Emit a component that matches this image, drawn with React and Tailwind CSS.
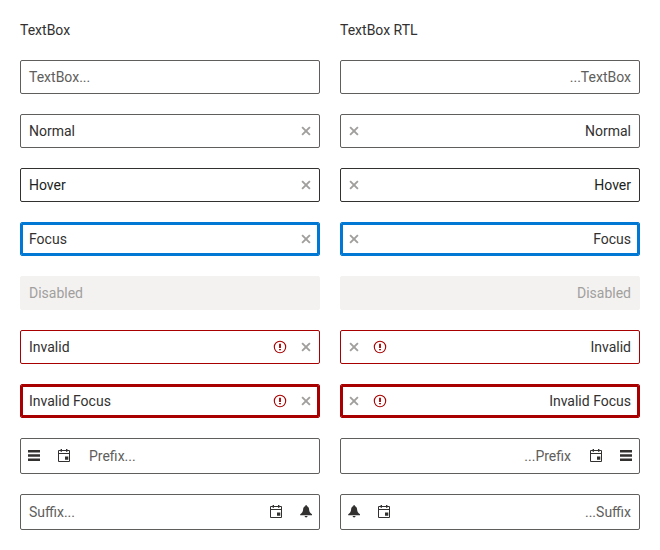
import React from "react";
import clsx from "clsx";

function Svg({ children, className }) {
  return (
    <svg viewBox="0 0 16 16" className={clsx("size-4 shrink-0", className)} aria-hidden="true">
      {children}
    </svg>
  );
}

function ClearIcon() {
  return (
    <Svg className="text-[#a19f9d]">
      <path d="M4.1 4.1 11.9 11.9M11.9 4.1 4.1 11.9" stroke="currentColor" strokeWidth="1.9" fill="none" />
    </Svg>
  );
}

function InvalidIcon() {
  return (
    <Svg className="text-[#a80000]">
      <circle cx="8" cy="8" r="5.7" fill="none" stroke="currentColor" strokeWidth="1.1" />
      <path d="M7.1 4.7h1.8V9H7.1zM7.1 9.9h1.8v1.4H7.1z" fill="currentColor" />
    </Svg>
  );
}

function MenuIcon() {
  return (
    <Svg className="text-[#323130]">
      <path d="M2 1.9h12v2.5H2zM2 6.2h12v2.5H2zM2 10.5h12V13H2z" fill="currentColor" />
    </Svg>
  );
}

function CalendarIcon() {
  return (
    <Svg className="text-[#323130]">
      <path d="M2.5 2.5h11v11h-11zM2.5 5.5h11" fill="none" stroke="currentColor" strokeWidth="1" />
      <path d="M4.6 1h1.4v2.8H4.6zM10 1h1.4v2.8H10zM9 8.5h3.3v3.3H9z" fill="currentColor" />
    </Svg>
  );
}

function BellIcon() {
  return (
    <Svg className="text-[#323130]">
      <path
        d="M7.5 1h1.2v1.1c1.5.4 2.2 1.5 2.4 3.3.2 2.5.9 3.5 2.9 4.8v1.1H2.2v-1.1c2-1.3 2.7-2.3 2.9-4.8.2-1.8.9-2.9 2.4-3.3zM6.6 12.1h3c-.1.9-.7 1.4-1.5 1.4s-1.4-.5-1.5-1.4z"
        fill="currentColor"
      />
    </Svg>
  );
}

const STATES = {
  normal: "border-[#605e5c] text-[#323130]",
  placeholder: "border-[#605e5c] text-[#605e5c]",
  hover: "border-[#323130] text-[#201f1e]",
  focus: "border-[#0078d4] text-[#323130] inset-shadow-[0_0_0_2px_#0078d4]",
  disabled: "border-[#f3f2f1] bg-[#f3f2f1] text-[#a19f9d]",
  invalid: "border-[#a80000] text-[#323130]",
  invalidFocus: "border-[#a80000] text-[#323130] inset-shadow-[0_0_0_2px_#a80000]",
};

function TextBox({ state = "normal", text, clear, invalid, prefix, suffix }) {
  return (
    <div
      className={clsx(
        "flex items-center rounded-[2px] border",
        prefix || suffix ? "h-9" : "h-[34px]",
        STATES[state],
      )}
    >
      {prefix && <div className="flex items-center gap-3.5 ps-[5px] pe-[9px]">{prefix}</div>}
      <span className="min-w-0 flex-1 px-2">{text}</span>
      <div className="flex items-center gap-2.5 pe-[5px]">
        {invalid && <InvalidIcon />}
        {clear && <ClearIcon />}
        {suffix && <div className="flex items-center gap-3.5">{suffix}</div>}
      </div>
    </div>
  );
}

function Column({ title, dir }) {
  return (
    <section className="flex w-[300px] flex-col gap-5">
      <h2 className="h-5">{title}</h2>
      <div dir={dir} className="flex flex-col gap-5">
        <TextBox state="placeholder" text="TextBox..." />
        <TextBox text="Normal" clear />
        <TextBox state="hover" text="Hover" clear />
        <TextBox state="focus" text="Focus" clear />
        <TextBox state="disabled" text="Disabled" />
        <TextBox state="invalid" text="Invalid" clear invalid />
        <TextBox state="invalidFocus" text="Invalid Focus" clear invalid />
        <TextBox state="placeholder" text="Prefix..." prefix={<><MenuIcon /><CalendarIcon /></>} />
        <TextBox state="placeholder" text="Suffix..." suffix={<><CalendarIcon /><BellIcon /></>} />
      </div>
    </section>
  );
}

export default function App() {
  return (
    <main className="flex h-[550px] w-[660px] gap-5 bg-white p-5 font-['Roboto',sans-serif] text-sm/5 text-[#323130]">
      <Column title="TextBox" dir="ltr" />
      <Column title="TextBox RTL" dir="rtl" />
    </main>
  );
}
